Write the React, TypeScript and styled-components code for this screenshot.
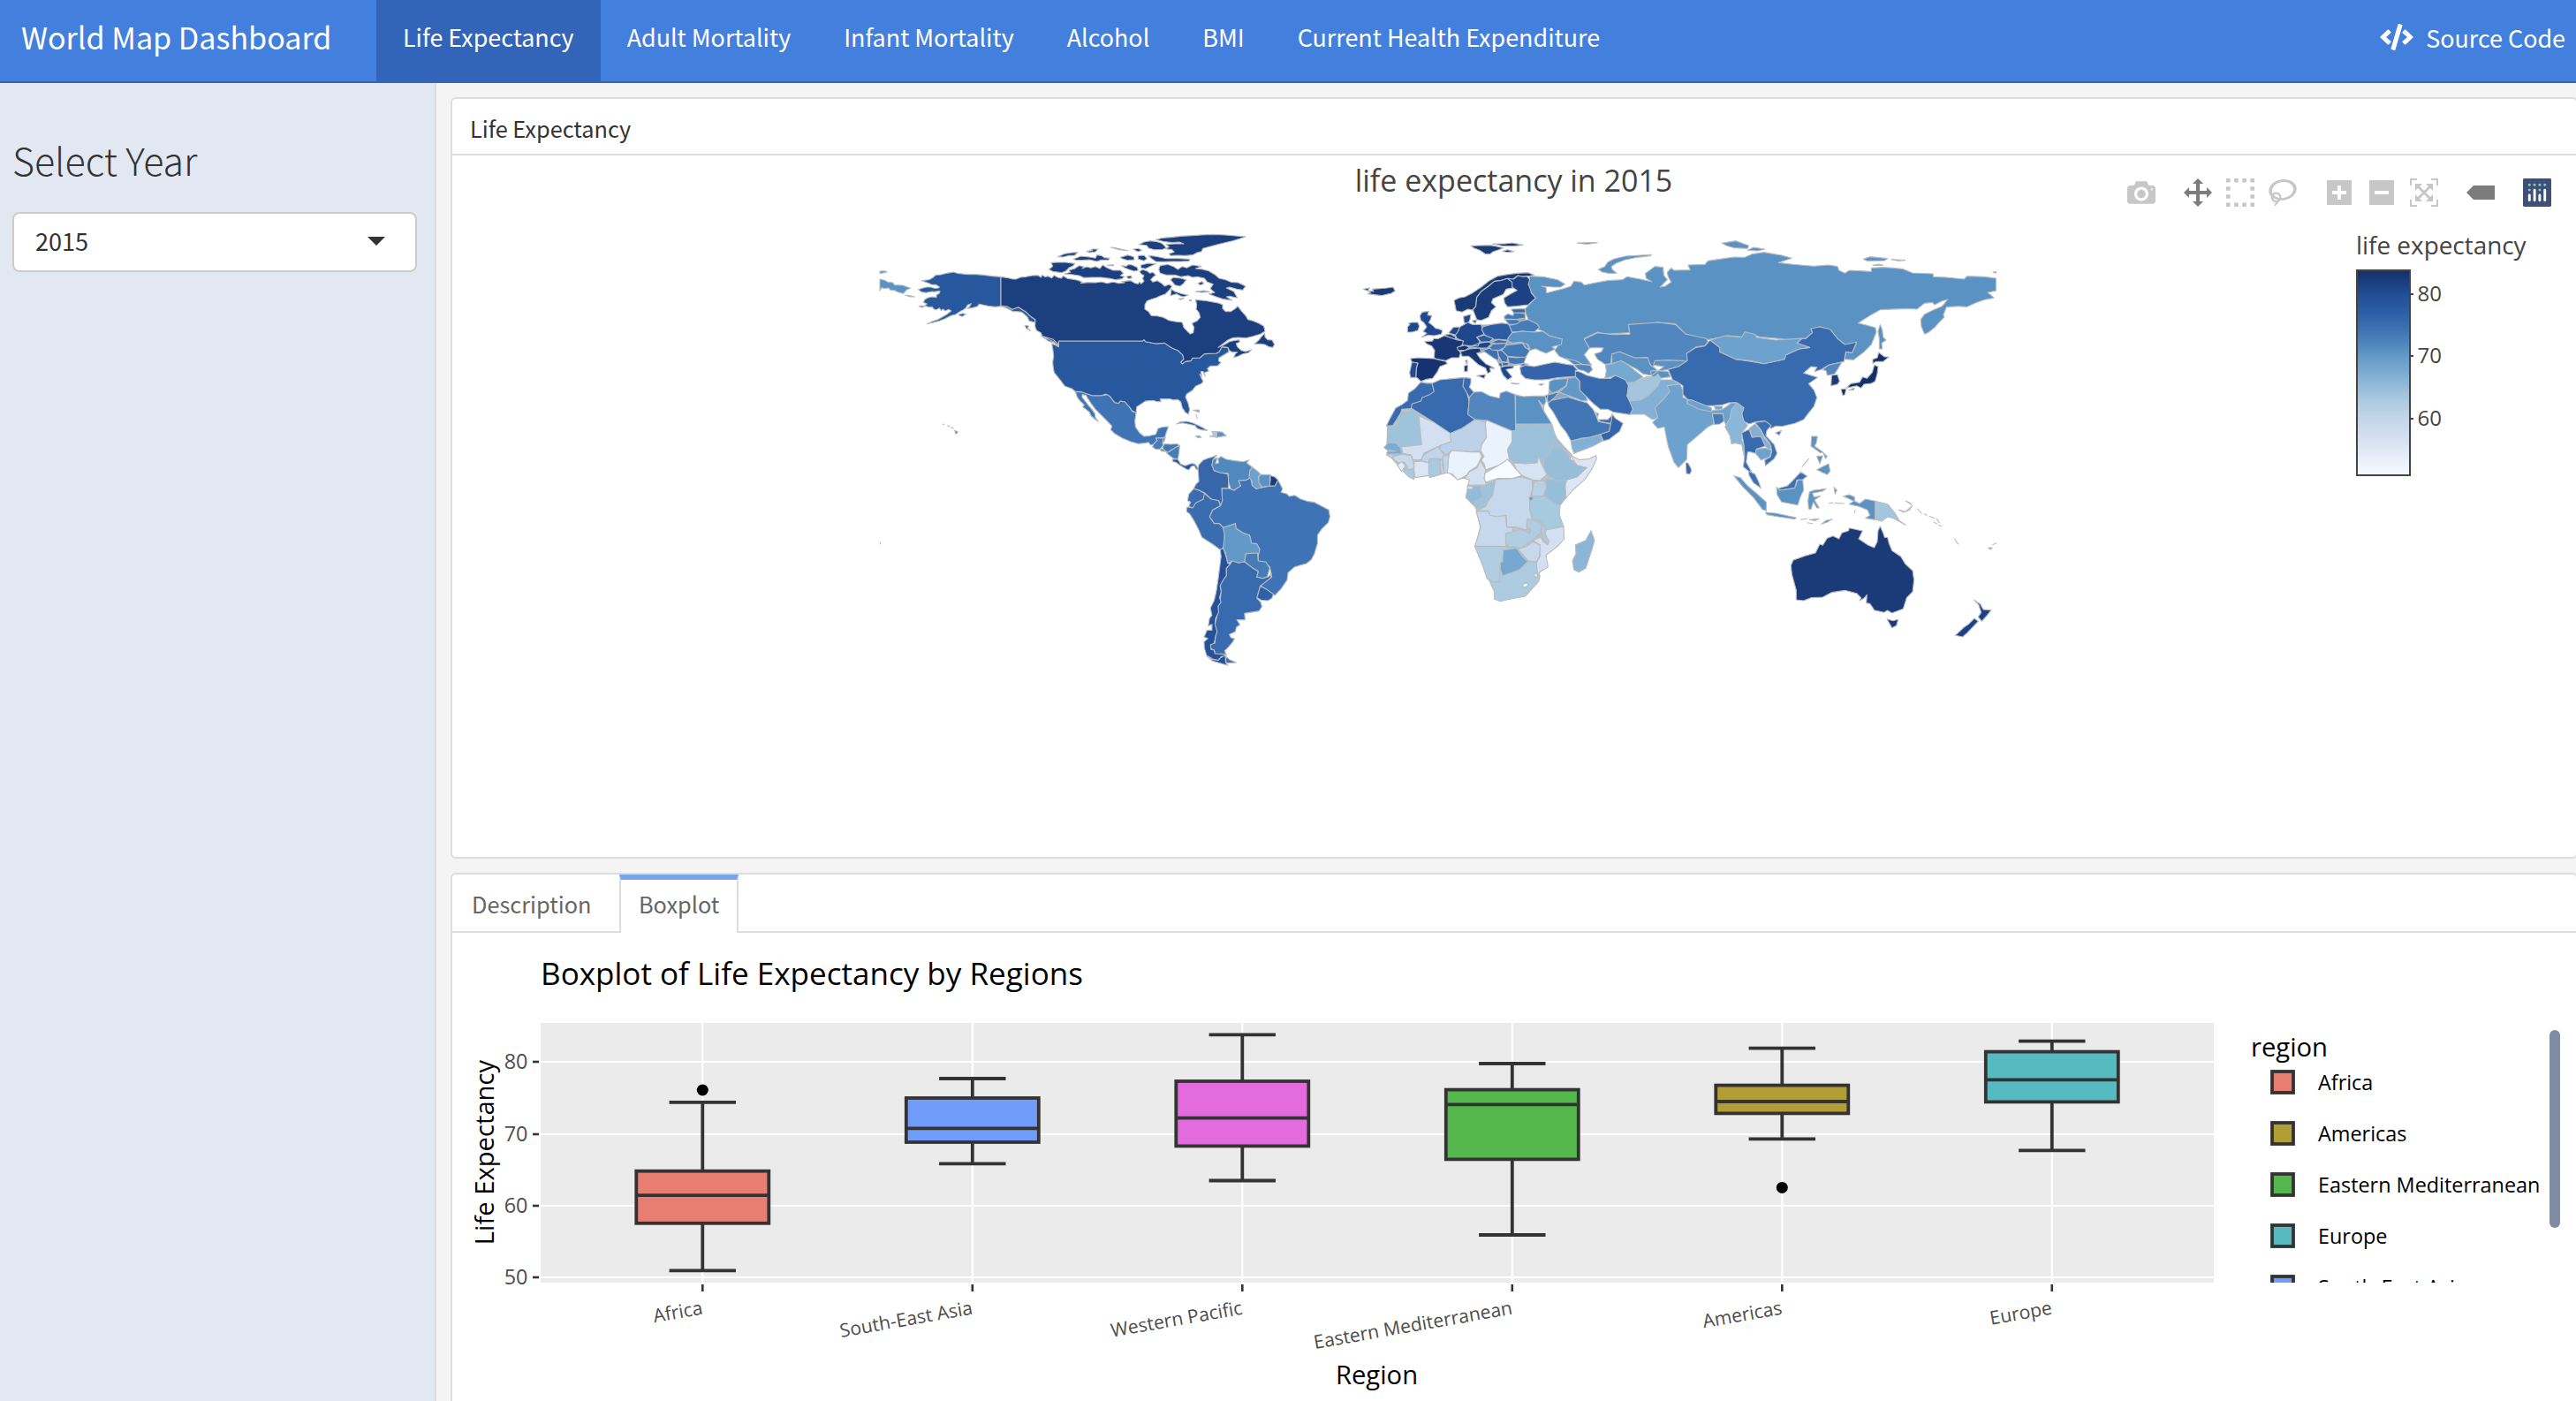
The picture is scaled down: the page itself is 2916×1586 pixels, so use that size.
import React from "react";
import styled, { createGlobalStyle } from "styled-components";

const ui = `"Noto Sans CJK SC", "Open Sans", sans-serif`;
const plot = `"Open Sans", "Noto Sans", sans-serif`;

const GlobalStyle = createGlobalStyle`
  * { box-sizing: border-box; }
  html, body { margin: 0; overflow: hidden; background: #f4f4f4; }
  body { font-family: ${ui}; color: #333; }
`;

const Page = styled.div`
  display: flex;
  flex-direction: column;
  height: 1586px;
  overflow: hidden;
`;

/* ---------- navigation bar ---------- */

const Navbar = styled.header`
  display: flex;
  flex: none;
  height: 94px;
  background: #437fdd;
  border-bottom: 2px solid #3264b8;
  color: #fff;
`;

const Brand = styled.div`
  flex: none;
  width: 426px;
  padding-left: 24px;
  font-size: 34.1px;
  line-height: 82px;
  white-space: nowrap;
`;

const Links = styled.nav`
  display: flex;
  flex: 1;
`;

const NavLink = styled.a<{ $active?: boolean }>`
  padding: 0 30px;
  font-size: 26.9px;
  line-height: 84px;
  white-space: nowrap;
  background: ${(p) => (p.$active ? "#3264b9" : "transparent")};
`;

const SourceLink = styled.a`
  display: flex;
  align-items: center;
  gap: 14px;
  height: 84px;
  padding-right: 12px;
  font-size: 26.9px;
  white-space: nowrap;
`;

/* ---------- page body ---------- */

const Body = styled.div`
  display: flex;
  flex: 1;
  min-height: 0;
`;

const Sidebar = styled.aside`
  flex: none;
  width: 494px;
  padding: 50px 20px 0 14px;
  background: #e2e8f2;
  border-right: 2px solid #dddddd;
`;

const SidebarTitle = styled.h3`
  margin: 0;
  height: 96px;
  font-size: 43px;
  font-weight: 300;
  line-height: 72px;
  color: #333;
`;

const Select = styled.div`
  display: flex;
  align-items: center;
  justify-content: space-between;
  height: 68px;
  padding: 0 34px 3px 24px;
  background: #fff;
  border: 2px solid #ccc;
  border-radius: 8px;
  font-size: 27.1px;
`;

const Caret = styled.span`
  width: 0;
  height: 0;
  border: 10px solid transparent;
  border-top-color: #333;
  border-bottom-width: 0;
`;

const Main = styled.main`
  display: flex;
  flex-direction: column;
  flex: 1;
  gap: 16px;
  min-width: 0;
  margin-right: -2px;
  padding: 16px 0 0 16px;
`;

const Card = styled.section<{ $height: number }>`
  display: flex;
  flex-direction: column;
  flex: none;
  height: ${(p) => p.$height}px;
  background: #fff;
  border: 2px solid #ddd;
  border-radius: 6px;
  overflow: hidden;
`;

const CardTitle = styled.div`
  flex: none;
  height: 64px;
  padding-left: 20px;
  border-bottom: 2px solid #ddd;
  font-size: 25.3px;
  line-height: 66px;
`;

const ChartArea = styled.div`
  position: relative;
  flex: 1;
  min-height: 0;

  > svg {
    display: block;
  }
`;

/* ---------- chart toolbar ---------- */

const ModeBar = styled.div`
  position: absolute;
  top: 26px;
  right: 28px;
  display: flex;
  gap: 32px;
`;

const ModeGroup = styled.div`
  display: flex;
  gap: 16px;
`;

const ModeIcon = styled.svg<{ $active?: boolean }>`
  display: block;
  width: 32px;
  height: 32px;
  fill: ${(p) => (p.$active ? "#7c7c7c" : "#c7c7c7")};
`;

/* ---------- tabs ---------- */

const Tabs = styled.div`
  display: flex;
  flex: none;
  height: 66px;

  &::after {
    content: "";
    flex: 1;
    border-bottom: 2px solid #ddd;
  }
`;

const Tab = styled.div<{ $active?: boolean; $width: number }>`
  width: ${(p) => p.$width}px;
  padding-left: ${(p) => (p.$active ? 20 : 22)}px;
  font-size: 25.3px;
  line-height: ${(p) => (p.$active ? 55 : 67)}px;
  color: #666;
  border-style: solid;
  border-color: ${(p) => (p.$active ? "#79a4e8 #ddd transparent" : "#ddd")};
  border-width: ${(p) => (p.$active ? "6px 2px 0" : "0 0 2px")};
`;

/* ---------- toolbar glyphs ---------- */

type Glyph = { w: number; d: string; active?: boolean };

const camera: Glyph = {
  w: 1000,
  d: "m500 450c-83 0-150-67-150-150 0-83 67-150 150-150 83 0 150 67 150 150 0 83-67 150-150 150z m400 150h-120c-16 0-34 13-39 29l-31 93c-6 15-23 28-40 28h-340c-16 0-34-13-39-28l-31-94c-6-15-23-28-40-28h-120c-55 0-100-45-100-100v-450c0-55 45-100 100-100h800c55 0 100 45 100 100v450c0 55-45 100-100 100z m-400-550c-138 0-250 112-250 250 0 138 112 250 250 250 138 0 250-112 250-250 0-138-112-250-250-250z m365 380c-19 0-35 16-35 35 0 19 16 35 35 35 19 0 35-16 35-35 0-19-16-35-35-35z",
};
const pan: Glyph = {
  w: 1000,
  active: true,
  d: "m1000 350l-187 188 0-125-250 0 0 250 125 0-188 187-187-187 125 0 0-250-250 0 0 125-188-188 186-187 0 125 252 0 0-250-125 0 187-188 188 188-125 0 0 250 250 0 0-126 187 188z",
};
const boxSelect: Glyph = {
  w: 1000,
  d: "m0 850l0-143 143 0 0 143-143 0z m286 0l0-143 143 0 0 143-143 0z m285 0l0-143 143 0 0 143-143 0z m286 0l0-143 143 0 0 143-143 0z m-857-286l0-143 143 0 0 143-143 0z m857 0l0-143 143 0 0 143-143 0z m-857-285l0-143 143 0 0 143-143 0z m857 0l0-143 143 0 0 143-143 0z m-857-286l0-143 143 0 0 143-143 0z m286 0l0-143 143 0 0 143-143 0z m285 0l0-143 143 0 0 143-143 0z m286 0l0-143 143 0 0 143-143 0z",
};
const lasso: Glyph = {
  w: 1031,
  d: "m1018 538c-36 207-290 336-568 286-277-48-473-256-436-463 10-57 36-108 76-151-13-66 11-137 68-183 34-28 75-41 114-42l-55-70 0 0c-2-1-3-2-4-3-10-14-8-34 5-45 14-11 34-8 45 4 1 1 2 3 2 5l0 0 113 140c16 11 31 24 45 40 4 3 6 7 8 11 48-3 100 0 151 9 278 48 473 255 436 462z m-624-379c-80 14-149 48-197 96 42 42 109 47 156 9 33-26 47-66 41-105z m-187-74c-19 16-33 37-39 60 50-32 109-55 174-68-42-25-95-24-135 8z m360 75c-34-7-69-9-102-8 8 62-16 128-68 170-73 59-175 54-244-5-9 20-16 40-20 61-28 159 121 317 333 354s407-60 434-217c28-159-121-318-333-355z",
};
const zoomIn: Glyph = {
  w: 875,
  d: "m1 787l0-875 875 0 0 875-875 0z m687-500l-187 0 0-187-125 0 0 187-188 0 0 125 188 0 0 187 125 0 0-187 187 0 0-125z",
};
const zoomOut: Glyph = {
  w: 875,
  d: "m0 788l0-876 875 0 0 876-875 0z m688-500l-500 0 0 125 500 0 0-125z",
};
const autoscale: Glyph = {
  w: 1000,
  d: "m250 850l-187 0-63 0 0-62 0-188 63 0 0 188 187 0 0 62z m688 0l-188 0 0-62 188 0 0-188 62 0 0 188 0 62-62 0z m-875-938l0 188-63 0 0-188 0-62 63 0 187 0 0 62-187 0z m875 188l0-188-188 0 0-62 188 0 62 0 0 62 0 188-62 0z m-125 188l-1 0-93-94-156 156 156 156 92-93 2 0 0 250-250 0 0-2 93-92-156-156-156 156 94 92 0 2-250 0 0-250 0 0 93 93 157-156-157-156-93 94 0 0 0-250 250 0 0 0-94 93 156 157 156-157-93-93 0 0 250 0 0 250z",
};
const hoverTag: Glyph = {
  w: 1500,
  active: true,
  d: "m375 725l0 0-375-375 375-374 0-1 1125 0 0 750-1125 0z",
};

const toolbar: Glyph[][] = [[camera], [pan, boxSelect, lasso], [zoomIn, zoomOut, autoscale], [hoverTag]];

function Toolbar() {
  return (
    <ModeBar>
      {toolbar.map((group, i) => (
        <ModeGroup key={i}>
          {group.map((g, j) => (
            <ModeIcon key={j} viewBox={`0 0 ${g.w} 1000`} $active={g.active}>
              <path transform="matrix(1 0 0 -1 0 850)" d={g.d} />
            </ModeIcon>
          ))}
        </ModeGroup>
      ))}
      <ModeGroup>
        <ModeIcon viewBox="0 0 132 132">
          <rect width="132" height="132" rx="6" fill="#3f4f75" />
          {[[78, 54], [102, 30], [78, 30], [54, 30], [30, 30], [30, 54]].map(([x, y]) => (
            <circle key={`${x}-${y}`} cx={x} cy={y} r="6" fill="#80cfbe" />
          ))}
          <g stroke="#fff" strokeWidth="12" strokeLinecap="round">
            <path d="M30 78V102M78 78V102M54 54V102M102 54V102" />
          </g>
        </ModeIcon>
      </ModeGroup>
    </ModeBar>
  );
}

/* ---------- world map ---------- */

type Land = [fill: string, ...rings: string[]];

const northAmerica: Land[] = [
  ["#5992c3", "48,198 64,202 75,208 92,210 98,218 125,219 140,224 152,229 138,235 128,247 110,242 98,236 84,235 78,228 62,230 55,226 48,238", "48,171 62,170 73,173 60,177 48,178"],
  ["#27579d",
    "459,190 430,188 400,184 375,182 345,182 310,178 298,174 275,178 255,183 238,184 228,193 215,200 190,203 215,212 222,216 238,217 250,224 248,228 232,229 220,225 208,225 195,228 178,233 190,242 205,244 225,240 232,241 252,238 250,246 240,252 240,260 225,258 210,262 200,268 196,277 208,282 200,288 215,293 225,292 232,300 240,302 250,296 256,305 262,300 270,306 282,301 290,306 275,318 258,328 245,335 225,342 208,350 230,345 250,340 268,333 290,322 305,318 320,308 330,303 340,296 346,286 358,281 352,292 345,298 360,296 380,290 385,283 400,286 420,290 440,292 459,290 475,295 490,302 500,308 515,308 530,310 548,325 555,340 575,345 576,335 560,325 545,310 530,300 518,293 498,301 480,291 459,287",
    "316,318 330,314 340,317 328,325 318,322", "180,290 190,288 200,291 190,294", "134,253 150,254 166,258 150,258",
    "302,712 313,717 306,724", "290,701 298,705", "278,696 284,699", "262,690 266,692",
    "655,408 940,408 945,404 950,410 985,417 1015,415 1040,432 1060,440 1076,455 1080,470 1070,480 1075,486 1085,478 1105,475 1110,466 1135,465 1150,452 1190,450 1200,445 1210,428 1230,430 1233,445 1220,453 1200,465 1198,475 1206,482 1195,492 1170,493 1160,502 1165,510 1150,516 1153,528 1146,512 1138,512 1142,530 1134,520 1140,535 1146,545 1140,553 1120,562 1110,575 1090,588 1086,598 1095,620 1100,640 1096,657 1085,650 1075,635 1070,615 1060,607 1045,608 1035,605 1015,605 1000,605 1003,614 990,614 975,610 950,612 935,622 920,632 918,652 905,645 895,632 880,615 865,612 858,620 845,617 830,597 815,588 800,594 770,594 740,585 733,580 712,580 700,570 677,562 660,540 640,515 637,500 635,480 638,460 636,440 632,418 645,422 655,428"],
  ["#1c3f7f",
    "459,190 478,193 500,198 510,198 525,192 545,190 565,186 585,185 595,192 600,184 608,190 620,188 632,194 640,185 652,192 665,195 670,187 685,196 700,198 720,202 735,208 730,212 755,209 780,210 800,207 820,212 840,208 860,212 880,210 870,206 900,203 915,212 925,214 930,207 935,214 945,205 940,195 945,186 935,180 930,172 940,166 955,170 965,178 975,175 985,184 975,192 968,200 975,208 990,203 1005,212 1015,222 1030,216 1040,222 1035,230 1028,238 1018,248 1000,255 985,262 970,266 955,272 948,285 948,300 960,308 970,322 990,323 1010,328 1030,338 1050,342 1075,345 1080,362 1092,375 1102,384 1112,380 1115,362 1108,348 1125,340 1136,328 1132,312 1122,300 1124,285 1120,268 1140,270 1160,272 1180,276 1200,280 1212,285 1212,298 1222,308 1240,308 1255,298 1263,290 1275,305 1290,322 1298,335 1315,340 1335,348 1352,358 1356,375 1340,385 1315,392 1290,398 1265,396 1245,398 1228,406 1210,420 1197,430 1215,422 1235,410 1255,406 1268,404 1270,412 1258,416 1262,428 1275,440 1290,444 1310,438 1300,448 1280,452 1265,460 1250,464 1255,452 1262,446 1245,446 1235,440 1230,430 1210,428 1200,445 1190,450 1150,452 1135,465 1110,466 1105,475 1085,478 1075,486 1070,480 1080,470 1076,455 1060,440 1040,432 1015,415 985,417 950,410 945,404 940,408 655,408 655,425 640,412 620,402 600,393 595,380 580,372 575,358 576,335 560,325 545,310 518,293 498,301 480,291 459,288",
    "985,64 1010,58 1045,55 1070,52 1110,50 1140,48 1180,46 1220,48 1290,54 1265,62 1245,68 1220,74 1195,80 1170,87 1145,94 1140,104 1125,108 1110,116 1085,118 1060,117 1035,118 1030,112 1048,106 1040,98 1018,95 1030,88 1020,80 1050,78 1080,78 1065,72 1040,74 1010,70",
    "928,80 945,72 965,68 985,70 1005,76 1015,85 1020,92 1005,98 980,98 960,92 955,84",
    "960,118 980,120 1000,124 1020,128 1060,128 1100,130 1098,137 1070,138 1040,138 1010,139 985,138 970,128",
    "925,118 945,117 955,128 945,136 925,130", "865,124 890,116 910,122 912,132 890,134 870,128", "908,97 925,94 938,100 925,105", "832,90 850,92 870,97 890,101 860,98",
    "706,130 730,120 760,123 780,127 785,116 800,118 810,125 828,127 825,133 800,133 785,138 760,132 735,134 715,134",
    "652,122 675,112 700,108 720,107 710,117 690,118 670,123", "750,103 770,101 765,96 788,96 780,105 760,108", "820,151 840,149 842,153",
    "622,165 635,155 630,142 650,141 680,141 710,145 705,152 690,160 680,170 665,176 650,174 635,172",
    "675,180 695,175 690,168 710,162 725,152 740,155 735,162 750,156 765,160 780,155 795,162 805,150 820,160 840,168 865,168 875,178 865,186 878,190 870,197 850,200 830,196 800,192 770,192 740,193 725,186 705,183",
    "868,152 885,154 892,148 905,150 922,158 925,168 912,171 895,166 880,160", "935,150 960,144 985,146 965,155 950,163 935,160", "885,190 900,186 905,194 892,196",
    "1000,152 1025,148 1045,155 1060,165 1075,155 1090,160 1110,150 1140,155 1120,162 1145,165 1165,170 1185,182 1200,195 1222,200 1240,208 1265,210 1290,222 1280,235 1260,232 1235,225 1225,228 1250,240 1262,262 1235,256 1225,258 1245,270 1215,266 1190,258 1165,248 1185,244 1170,230 1180,215 1160,208 1150,195 1125,190 1110,192 1095,186 1070,190 1050,184 1020,184 1000,178 995,165",
    "1035,200 1045,192 1070,195 1088,200 1080,212 1068,222 1050,218", "1038,232 1050,240 1075,248 1095,252 1080,258 1070,256 1055,248 1035,254", "1128,212 1142,206 1148,214 1135,218", "1120,240 1150,237 1168,241 1140,243", "1062,265 1080,263 1070,268", "1098,270 1106,268 1104,273",
    "1320,418 1335,405 1345,392 1355,382 1356,395 1365,404 1380,405 1388,420 1382,430 1370,428 1355,420 1340,418",
    "595,390 615,396 635,402 650,415 655,425 640,415 620,408", "540,355 553,357 550,364 560,373 546,366"],
  ["#3e74b5", "712,580 735,582 770,594 800,594 820,590 830,597 845,617 858,620 865,612 880,615 895,632 905,647 918,652 914,680 916,700 930,720 945,732 965,730 985,725 993,705 1010,700 1028,699 1022,715 1016,733 1012,736 985,738 990,745 978,758 968,762 960,752 945,755 925,757 900,750 870,737 845,722 832,710 836,697 820,680 805,665 790,650 780,640 765,620 755,605 748,592 735,590 735,600 745,612 755,625 768,640 778,655 780,668 790,682 780,675 765,662 760,650 745,638 737,632 742,625 728,612 718,598"],
  ["#467db9", "985,738 1010,738 1008,755 1010,762 1000,775 985,776 974,768 978,758 990,745", "1010,738 1018,733 1014,748 1008,755", "998,776 1010,774 1022,784 1005,782"],
  ["#4278b7", "1008,768 1015,757 1035,759 1058,757 1066,765 1050,772 1035,780 1025,786 1012,778"],
  ["#27579d", "1055,690 1070,682 1090,681 1110,686 1130,695 1145,703 1160,712 1140,710 1125,704 1118,695 1095,690 1075,686"],
  ["#b1cfe1", "1175,715 1190,716 1192,735 1180,733 1168,732 1182,728"],
  ["#5a93c4", "1192,716 1210,717 1224,730 1205,733 1192,736", "1120,731 1132,730 1140,735 1128,737", "1112,643 1132,642 1132,650", "1122,658 1126,672"],
];

const southAmerica: Land[] = [
  ["#467db9", "1032,12 1030,35 1026,60 1010,56 1000,48 988,38 1000,32 1015,22"],
  ["#25549b", "1008,60 1026,60 1035,76 1050,82 1070,74 1082,76 1092,90 1092,96 1086,92 1080,82 1070,84 1062,96 1055,94 1045,88 1030,78 1020,70 1010,68"],
  ["#3e74b5", "1355,130 1370,160 1365,172 1385,178 1392,186 1410,182 1430,195 1450,202 1475,206 1500,220 1522,232 1526,255 1520,275 1500,295 1485,317 1485,345 1475,380 1465,400 1450,413 1410,425 1388,445 1385,470 1365,500 1345,522 1335,515 1315,500 1297,490 1315,472 1335,460 1328,425 1310,408 1290,405 1290,380 1295,365 1285,347 1268,345 1262,318 1240,310 1217,295 1215,278 1175,292 1162,278 1145,278 1130,255 1140,232 1165,218 1172,200 1170,158 1192,158 1210,165 1232,150 1225,132 1252,130 1265,120 1270,148 1283,160 1330,150 1345,150"],
  ["#3766ab", "1092,92 1095,78 1110,62 1125,56 1140,52 1155,45 1142,60 1138,80 1145,98 1165,105 1190,110 1193,130 1192,158 1170,158 1172,200 1167,216 1160,200 1135,195 1115,175 1095,165 1078,160 1085,145 1095,135 1094,115"],
  ["#4f89be", "1142,60 1155,55 1150,75 1160,72 1158,58 1168,50 1185,60 1215,65 1240,68 1260,62 1252,72 1270,86 1262,100 1265,120 1252,130 1225,132 1232,150 1210,165 1200,160 1192,135 1192,108 1165,105 1145,98 1138,80"],
  ["#6ca2cd", "1270,86 1285,98 1298,110 1290,120 1295,145 1303,155 1283,160 1270,148 1270,135 1260,120 1262,100"],
  ["#5992c3", "1298,112 1330,112 1328,130 1330,150 1303,154 1292,140 1292,120"],
  ["#1a3a78", "1330,115 1345,120 1355,130 1345,150 1328,150 1330,130"],
  ["#3a6cb0", "1078,160 1095,165 1113,175 1110,195 1085,208 1075,225 1062,220 1068,205 1058,200 1062,178", "1113,175 1135,195 1160,200 1165,218 1140,232 1130,255 1145,278 1162,278 1175,292 1180,310 1178,350 1172,365 1165,367 1140,348 1105,325 1095,300 1080,270 1065,245 1055,238 1055,222 1075,225 1085,208 1110,195"],
  ["#6399c8", "1175,292 1215,278 1217,295 1240,310 1262,318 1268,345 1285,347 1295,365 1292,382 1250,380 1245,408 1225,412 1205,405 1190,413 1183,380 1175,362 1180,320"],
  ["#467db9", "1250,380 1288,378 1290,405 1315,408 1328,430 1320,458 1305,464 1285,460 1290,440 1270,428 1245,408"],
  ["#376aae", "1198,415 1205,405 1225,412 1245,408 1270,428 1290,440 1285,460 1305,464 1325,458 1333,448 1332,462 1297,490 1286,532 1298,545 1302,560 1293,575 1245,583 1247,605 1220,605 1230,622 1218,630 1215,645 1195,655 1200,665 1212,670 1205,682 1190,700 1180,710 1185,725 1148,720 1145,708 1133,702 1135,685 1147,685 1150,660 1148,620 1155,590 1158,560 1165,540 1168,510 1165,480 1185,455 1185,430"],
  ["#2f61a8", "1297,490 1315,500 1340,518 1335,532 1322,540 1300,538 1286,530"],
  ["#24519a", "1165,367 1175,362 1183,385 1190,413 1198,415 1185,430 1185,455 1172,475 1165,490 1168,510 1163,530 1168,545 1158,560 1160,580 1150,600 1148,620 1155,645 1150,660 1145,685 1133,690 1135,706 1145,708 1148,720 1185,722 1165,735 1158,742 1140,738 1120,725 1113,700 1112,680 1125,668 1112,664 1122,640 1138,640 1138,620 1126,626 1130,600 1138,590 1133,565 1145,540 1152,510 1158,470 1163,430 1168,390", "1120,727 1140,740 1160,742 1168,730 1182,727 1183,750 1190,760 1165,752 1140,745"],
  ["#376aae", "1183,728 1195,740 1218,750 1185,752"],
  ["#9aa7b0", "47,343 48,343 48,348"],
];

const europe: Land[] = [
  ["#8ea9c8", "368,362 440,354 542,352 555,312 586,302 590,335 620,378 600,420 592,465 575,488 550,490 510,500 485,462 460,440 435,450 400,440 370,448 362,440 340,400", "672,547 758,528 798,610 740,598 668,612"],
  ["#1a3a78", "40,232 62,228 55,236 75,240 70,232 95,230 120,228 140,225 148,238 135,246 100,254 72,250 55,248 65,243", "405,85 430,84 470,83 490,86 515,92 500,98 480,105 470,113 455,113 435,100 415,92", "478,78 520,78 545,75 582,82 550,86 510,85", "512,103 530,98 552,104 530,107", "348,270 365,262 385,258 410,245 440,225 465,205 495,188 530,182 560,178 600,176 620,184 600,188 580,190 565,186 545,200 530,196 505,203 485,205 465,222 440,240 425,260 422,290 410,303 395,300 375,310 355,305"],
  ["#1b3c7b", "425,260 440,240 465,222 485,205 505,203 530,196 545,208 548,228 525,232 515,250 480,265 475,278 490,292 475,305 465,328 440,338 425,335 415,310 412,303 422,290"],
  ["#1c4285", "530,196 550,198 565,186 580,190 595,188 605,200 600,215 608,235 610,245 625,262 600,285 560,290 530,292 520,280 517,262 545,245 562,236 545,225 545,208"],
  ["#22498f", "380,325 395,320 405,318 402,335 395,350 382,345", "410,340 425,336 420,348"],
  ["#1f488c", "232,322 240,310 262,307 258,320 272,322 268,335 262,345 275,355 285,365 295,367 308,372 305,385 280,390 260,388 238,395 255,382 243,376 255,360 245,345 235,338", "190,360 198,352 194,348 205,345 225,345 230,358 225,372 205,378 190,378", "315,388 335,384 355,395 350,402 330,395", "330,380 345,362 368,360 360,378 352,388", "368,360 385,350 395,345 410,352 440,352 445,372 450,385 425,395 435,410 430,425 400,425 375,422 378,408 358,400 352,388 360,378", "400,428 435,415 465,410 475,418 460,432 430,432"],
  ["#183774", "248,410 275,408 278,400 295,400 315,390 335,397 360,405 380,408 375,422 362,432 370,450 365,465 340,465 320,475 290,470 280,465 282,440 272,425 255,418"],
  ["#163270", "200,468 225,465 280,468 320,478 325,485 300,495 290,515 275,535 255,538 235,545 225,535 218,530 220,500 225,483 205,480", "358,430 385,422 400,430 385,440 362,440"],
  ["#214b92", "205,480 225,483 220,500 218,532 200,532 197,515"],
  ["#2c5da4", "445,360 475,352 510,347 530,350 542,358 545,385 530,405 505,403 480,402 460,392 450,385 442,370"],
  ["#2a5ba2", "425,395 450,388 480,400 470,410 440,412"],
  ["#3c70b3", "475,412 500,403 530,408 525,415 490,418", "495,440 512,440 530,460 528,480 510,478 500,460", "445,440 470,432 495,440 498,455 500,475 485,468 462,452", "500,478 512,485 510,500 500,490", "510,480 535,482 530,492 512,492"],
  ["#4379b7", "468,430 480,418 525,415 520,430 500,440 475,438", "510,440 525,422 560,418 580,415 590,430 605,440 592,462 560,463 530,460 520,450", "530,462 560,465 592,462 585,485 555,488 535,485", "518,325 530,316 548,322 552,310 588,315 590,330 560,335 520,333", "520,335 560,335 575,340 560,352 535,352"],
  ["#183774", "370,445 400,435 435,432 440,445 425,450 435,465 455,485 480,497 485,502 470,500 472,512 462,518 455,500 430,488 410,470 398,460 375,460", "425,526 455,522 450,535", "382,493 395,490 393,512 383,512", "386,475 393,473 392,488"],
  ["#1f488c", "505,498 525,493 552,492 548,500 525,505 545,530 530,540 515,525 508,510", "542,551 570,553 558,555", "635,556 652,553 645,559"],
  ["#3766ab", "542,300 588,298 590,312 550,312"],
  ["#467db9", "535,355 560,350 575,340 600,335 630,350 638,362 620,378 580,375 545,378"],
  ["#5992c3", "530,400 545,380 580,375 620,378 650,375 670,390 715,402 712,420 680,428 692,435 660,450 640,442 625,434 605,440 598,420 575,412 545,415 530,408", "580,415 600,420 605,435 592,432", "765,75 800,74 835,74 810,78 795,79", "838,165 860,155 870,140 890,130 930,120 980,117 1018,115 1015,119 970,124 930,132 900,143 882,155 885,165 900,178 870,178 850,173", "672,545 690,538 735,535 728,560 700,578 680,585 670,570"],
  ["#5187be", "730,468 760,475 785,488 755,488", "755,488 785,488 810,490 818,505 805,518 790,510 770,505"],
  ["#3464aa", "572,498 590,490 620,495 650,488 690,480 730,487 752,490 765,505 762,528 740,530 700,533 670,538 650,540 620,540 590,535 575,520", "572,492 580,484 600,487 585,492"],
  ["#1c4285", "658,592 666,594 662,610"],
  ["#467db9", "666,590 680,588 705,580 690,600 668,618 664,608"],
  ["#6399c8", "735,535 760,530 775,545 775,570 795,590 800,612 780,610 740,595 705,582 730,560"],
  ["#376aae", "760,508 780,515 800,525 840,535 880,535 895,525 930,540 940,560 935,595 945,615 955,640 945,658 890,650 870,640 845,640 820,620 800,600 775,575 775,545 760,528"],
];

const africa: Land[] = [
  ["#bdc3c9", "205,98 243,102 320,87 372,87 368,115 383,134 440,147 472,154 495,130 555,149 626,147 622,195 648,240 666,290 715,345 712,360 765,388 735,420 697,450 696,490 673,520 676,550 688,588 668,655 630,685 608,740 555,820 475,838 457,810 390,657 407,590 395,537 388,505 367,450 372,430 355,423 330,428 300,405 185,420 127,380 94,342 92,310 94,250 140,190 180,130"],
  ["#4276b5", "635,160 665,150 680,140 740,160 770,168 790,190 800,210 808,232 850,240 845,265 815,275 780,285 745,290 715,298 700,270 680,245 655,200 640,180"],
  ["#376aae", "808,225 840,225 855,210 855,225 850,238 815,232", "800,200 808,205 805,218"],
  ["#3464aa", "855,205 865,220 892,238 880,265 860,280 845,292 825,298 815,275 845,265 850,238 853,225"],
  ["#83b0d6", "715,298 745,290 780,285 815,275 822,298 790,315 765,325 725,340 718,320"],
  ["#376aae", "205,98 225,102 243,102 250,130 235,140 210,150 205,162 175,172 172,188 140,190 138,200 125,222 110,245 88,247 100,222 120,185 140,175 160,160 163,135 185,120", "243,102 270,90 320,85 352,82 348,112 362,135 370,165 365,205 390,225 345,255 305,272 250,235 172,186 175,172 205,162 210,150 235,140 250,130", "352,82 375,85 375,100 370,115 385,132 370,150 362,135 348,112"],
  ["#5187be", "370,150 385,132 410,130 440,145 472,152 475,135 495,128 525,140 527,262 515,264 430,228 390,225 365,208"],
  ["#5992c3", "527,142 555,147 590,145 628,145 630,165 622,178 605,160 625,200 650,240 527,241"],
  ["#9ec4dc", "172,188 200,210 208,310 145,313 138,320 120,308 90,310 92,248 125,247 125,225 138,205 140,200 172,198"],
  ["#d3e0f1", "198,212 250,235 305,272 308,300 275,312 245,325 215,340 207,362 178,362 172,345 145,340 138,318 208,310"],
  ["#bdd2e9", "305,272 345,255 390,225 425,235 428,285 410,310 410,330 375,335 310,330 290,345 268,325 275,312 308,300"],
  ["#eaf2fb", "430,228 515,264 515,300 500,330 505,360 470,380 425,395 420,375 410,362 420,350 408,330 412,310 428,285 424,235"],
  ["#9bc1db", "527,241 650,240 658,270 668,290 650,310 645,335 625,360 615,375 605,350 600,372 560,375 520,372 505,350 500,325 515,300 515,264 527,262", "658,290 668,290 690,315 718,345 700,330 680,322 650,320"],
  ["#dde7f4", "712,345 745,362 778,358 800,347 802,358 785,395 760,430 720,465 698,492 695,450 700,430 735,420 768,388 735,380"],
  ["#97bed9", "650,320 680,322 705,340 712,360 735,380 768,388 735,420 700,430 665,432 635,415 620,385 625,360 645,335", "630,425 665,432 700,430 695,450 698,490 675,520 640,495 625,485 632,455"],
  ["#d6e3f2", "520,372 560,375 600,372 605,350 615,375 620,385 633,412 610,432 585,430 548,415 530,395"],
  ["#f8fbff", "425,405 470,380 500,360 530,395 548,415 515,425 465,425 425,438 418,420"],
  ["#eaf2fb", "300,345 310,330 375,335 405,335 412,350 395,385 370,400 360,415 330,430 312,410 295,405"],
  ["#d3e0f1", "412,355 410,370 425,395 420,425 428,447 365,447 370,430 355,425 370,402 395,390"],
  ["#c0d5ea", "280,350 300,345 295,405 285,408 278,380", "270,360 280,362 284,408 274,410", "208,365 210,352 225,338 262,318 285,345 275,360 235,358 232,372"],
  ["#a9cadf", "235,358 268,358 272,412 235,422 230,400", "145,400 160,388 180,400 182,428 165,420"],
  ["#dbe5f3", "182,368 207,366 232,372 232,415 185,422 182,395"],
  ["#79acd6", "80,320 95,303 120,305 135,320 142,342 88,342 92,333 120,332 90,328"],
  ["#c8d9ec", "110,350 145,343 172,347 180,368 182,390 165,395 150,370 130,372 115,362", "88,345 115,345 105,355"],
  ["#e5eef8", "125,380 140,368 153,382 140,402"],
  ["#92bcdb", "365,450 408,450 415,490 385,505 388,520 358,490"],
  ["#d6e3f2", "363,450 382,452 380,462 365,460"],
  ["#9ec4dc", "412,455 440,440 458,435 450,480 430,500 420,525 390,525 385,505 415,490"],
  ["#c6d8ec", "458,428 515,425 548,420 583,430 585,460 575,490 575,530 585,562 565,570 565,600 530,590 497,590 495,550 465,555 440,550 435,535 395,535 425,520 435,500 450,480", "393,537 435,535 440,550 465,555 492,550 497,590 517,592 517,610 493,612 495,660 388,655 400,620 408,590"],
  ["#b9d1e7", "590,435 625,432 632,455 620,485 580,485"],
  ["#a6cade", "585,485 625,485 678,520 675,550 690,588 630,600 615,570 582,560 575,530 575,500"],
  ["#5c96c7", "573,488 587,488 582,500 574,498"],
  ["#b1cde2", "495,612 517,605 545,598 575,612 577,600 565,590 567,562 600,570 615,580 612,610 585,632 545,662 505,658 493,640", "388,655 470,655 530,658 485,670 483,710 473,775 450,778 430,765 415,720"],
  ["#d3e0f1", "630,600 690,588 692,630 670,655 630,685 637,725 610,742 605,752 598,735 598,710 610,690 608,650 585,635 612,625 622,640 635,650 640,640 628,615"],
  ["#aecce2", "615,580 625,590 630,625 640,635 635,650 622,630 615,610"],
  ["#c6d8ec", "535,665 565,655 585,640 610,650 608,690 598,708 570,705"],
  ["#76a9d2", "485,668 530,662 550,690 568,707 540,735 515,745 483,755 475,735 475,710 483,708"],
  ["#adcbe1", "475,712 475,735 483,755 515,745 540,735 570,708 598,708 600,745 610,755 605,775 560,825 520,832 475,842 455,835 455,810 437,770 455,778 473,775"],
  ["#ffffff", "550,788 562,778 570,785 558,796"],
  ["#dbe5f3", "590,748 600,746 602,760 591,760"],
  ["#8bb6d8", "783,602 795,635 785,670 765,730 742,743 725,735 720,705 732,680 730,650 765,635"],
];

const asia: Land[] = [
  ["#5992c3",
    "-355,188 -310,190 -260,200 -235,215 -250,225 -275,225 -315,222 -300,226 -298,245 -270,238 -240,230 -215,222 -205,205 -180,208 -170,218 -130,210 -90,203 -40,200 -25,190 20,198 60,207 40,195 38,178 70,155 98,158 100,185 112,200 88,225 105,222 125,208 115,190 112,175 125,160 135,168 190,167 183,150 240,148 250,136 310,127 340,123 375,124 400,113 440,107 500,117 535,127 490,142 540,148 610,154 660,150 690,155 695,168 715,178 730,168 805,172 805,160 850,158 910,163 945,177 1015,180 1015,190 1060,192 1120,198 1130,188 1190,190 1228,195 1228,238 1200,243 1222,262 1190,268 1160,278 1130,292 1100,290 1060,293 1050,318 1052,328 1035,345 1020,362 1000,378 986,385 975,360 973,335 985,318 1010,305 1045,290 1065,267 1045,272 1020,285 1012,277 985,280 960,300 925,298 835,302 800,322 760,347 790,355 818,362 822,378 805,420 780,445 745,472 715,470 718,445 740,448 755,415 715,420 690,400 665,370 630,360 600,368 605,380 580,400 555,400 530,405 490,400 430,395 380,380 370,395 320,390 270,400 240,405 175,385 140,350 80,345 40,350 -20,355 -15,380 -100,385 -125,378 -170,400 -152,432 -170,455 -145,490 -175,488 -230,470 -255,460 -270,440 -245,402 -290,390 -310,375 -335,365 -360,335 -370,310 -370,298 -335,262 -352,240 -360,212",
    "835,352 842,370 845,395 855,405 840,415 842,435 832,435 832,400 828,375", "297,76 345,68 388,84 385,94 340,92 315,85", "385,100 405,90 443,96 420,102", "778,130 800,122 860,128 850,135 790,136", "873,131 920,134 895,136", "810,151 830,147 845,151", "1218,175 1228,172 1228,178"],
  ["#5187be", "40,348 80,345 140,352 175,385 245,400 250,410 240,425 210,428 180,450 180,475 165,482 110,473 70,490 60,497 45,470 0,465 -50,445 -76,452 -80,485 -98,488 -110,480 -125,470 -135,452 -112,445 -105,432 -130,430 -152,432 -170,402 -125,380 -75,386 -15,385 -20,352"],
  ["#5992c3", "-76,452 -50,445 0,465 45,464 55,490 70,500 80,510 60,525 30,520 10,505 -40,478 -76,485", "65,490 70,475 110,473 165,475 180,480 150,495 115,505 80,510 100,495", "55,510 75,508 115,512 122,530 85,535 60,530"],
  ["#76a9d2", "-98,490 -76,485 -45,475 -20,490 10,515 30,530 0,548 -25,550 -65,525 -80,530 -100,535 -95,510"],
  ["#83b0d6", "-20,612 20,608 50,590 80,560 90,540 130,540 155,555 115,560 120,580 100,605 75,632 80,668 62,675 35,657 -15,657 -5,640"],
  ["#a3c6de", "-25,550 0,550 40,530 70,530 80,520 90,535 80,560 50,590 20,608 -20,612 -22,590"],
  ["#6ca2cd", "155,555 165,575 165,600 180,605 180,620 262,645 300,640 330,618 350,618 370,630 345,650 325,670 312,695 303,675 300,655 265,655 270,690 250,700 215,730 180,760 178,810 150,838 135,820 115,765 102,700 80,705 62,685 80,668 70,635 100,605 120,580 112,560"],
  ["#376aae", "258,405 290,430 290,445 345,470 400,478 440,485 510,470 515,455 560,435 595,430 555,418 560,400 582,400 605,380 600,366 630,360 665,368 690,400 715,420 755,412 740,448 718,445 712,478 660,490 635,505 612,512 620,497 600,495 575,517 600,525 622,532 592,553 610,575 620,600 610,630 590,655 575,675 545,688 500,698 480,697 465,705 440,680 410,683 390,690 370,680 365,655 372,635 345,617 320,618 300,625 265,628 230,628 180,605 165,590 165,560 150,550 130,540 115,505 150,495 180,475 178,450 210,430 240,425", "480,720 500,712 492,728"],
  ["#6ca2cd", "258,405 310,390 365,395 375,377 410,385 415,395 430,398 480,405 555,400 568,402 552,415 595,430 560,435 515,455 510,470 440,485 400,476 345,470 290,445 290,430", "180,610 195,608 262,635 262,648 220,640 180,620", "272,630 300,630 298,640 275,640"],
  ["#467db9", "265,655 300,655 305,680 290,690 272,692"],
  ["#8bb6d8", "330,640 350,618 372,635 365,655 372,680 385,695 365,720 365,745 378,780 375,810 365,760 345,755 330,757 325,730 308,700 325,670"],
  ["#376aae", "365,720 390,708 400,735 430,732 445,765 415,775 412,790 395,785 385,785 380,820 400,855 388,850 370,835 375,800 372,760"],
  ["#3b70b4", "410,685 445,680 465,695 450,712 447,730 475,760 485,790 475,808 445,832 443,812 462,802 467,780 460,755 440,730 430,710", "388,850 410,860 422,885 430,908 405,890 390,865", "490,908 520,900 540,880 565,853 587,867 570,880 552,880 545,908 495,915"],
  ["#83b0d6", "390,705 410,690 430,712 440,735 465,765 460,780 445,765 430,732 400,735"],
  ["#6ca2cd", "412,790 415,775 445,772 467,780 460,802 430,812"],
  ["#5187be", "640,505 660,490 705,480 690,505 680,520 655,525 652,510"],
  ["#1a3a78", "670,525 690,522 697,545 690,555 668,560"],
  ["#132f69", "830,447 850,462 865,462 845,478 820,478 810,485 810,470 825,465", "815,490 828,495 825,520 818,545 805,552 780,555 770,568 755,560 720,568 735,553 765,548 775,530 790,535 808,515", "702,572 720,570 715,590 708,593", "728,575 748,568 745,574"],
  ["#3464aa", "175,822 182,822 192,840 194,850 188,860 177,858"],
  ["#5992c3", "338,866 360,872 385,900 420,930 448,955 448,985 435,980 405,940 370,905", "445,990 480,993 550,1008 545,1013 490,1005 450,998", "483,905 495,915 545,908 555,880 572,880 575,915 565,935 555,965 500,955 485,930", "595,920 610,915 652,910 640,918 605,925 610,938 632,935 612,948 628,975 620,975 608,955 600,980 592,978 590,950", "602,732 622,732 618,755 612,765 640,785 632,788 600,765", "620,800 640,798 630,825", "640,785 655,800 650,808", "620,845 640,835 660,825 665,850 655,862 640,855", "570,835 592,808", "678,905 688,915 682,928"],
];

const oceania: Land[] = [
  ["#5992c3", "380,245 400,240 418,248 418,262 435,270 455,255 488,262 488,325 455,320 470,310 462,292 432,280 400,272 415,262 395,252", "332,269 345,267", "352,268 382,270", "235,324 255,322", "265,325 298,322 285,328", "258,335 275,338", "305,340 320,328 342,323 325,334", "418,300 420,293"],
  ["#a3c6de", "488,262 530,272 545,290 555,302 570,328 592,343 550,320 530,315 510,330 488,325", "568,292 590,298 612,280 605,292 585,300", "592,262 604,266 614,278 606,270", "632,288 645,303", "655,305 663,310", "672,313 690,320", "697,322 706,335", "686,333 697,338", "704,343 714,347", "758,390 763,400", "764,400 770,408"],
  ["#76a9d2", "872,420 886,420 880,426", "887,410 899,404"],
  ["#1a3a78", "505,347 515,370 520,385 530,385 535,405 545,430 575,450 590,475 615,498 620,530 615,570 595,590 583,628 545,642 530,633 518,640 485,632 470,610 458,608 460,580 450,592 435,600 440,590 425,575 385,565 340,572 310,588 270,590 245,600 220,597 220,565 205,510 202,480 210,462 250,448 285,438 300,408 310,412 325,388 345,380 365,390 375,370 398,362 400,353 445,363 432,390 465,412 485,420 495,400 498,362", "528,662 548,668 566,664 560,685 545,692"],
  ["#1c4285", "825,598 845,612 855,630 882,632 868,650 850,670 838,655 848,640 840,615", "825,660 838,670 800,710 785,723 760,718 790,690 805,680"],
];

const regions: { x: number; y: number; sx: number; lands: Land[] }[] = [
  { x: 980, y: 250, sx: 3, lands: northAmerica },
  { x: 980, y: 500, sx: 2.9037, lands: southAmerica },
  { x: 1850, y: 250, sx: 3, lands: asia },
  { x: 1540, y: 400, sx: 3, lands: africa },
  { x: 1530, y: 250, sx: 3, lands: europe },
  { x: 1960, y: 480, sx: 3, lands: oceania },
];

const scaleStops: [number, string][] = [
  [0, "#132f69"], [11, "#214c93"], [22, "#2f61a8"], [31, "#4278b6"], [39, "#5890c2"], [42, "#639ac8"],
  [53, "#86b3d5"], [65, "#b1cde1"], [73, "#c5d6ea"], [84, "#d8e3f2"], [100, "#f7fbff"],
];

function WorldMap() {
  return (
    <svg width="2404" height="794" viewBox="512 176 2404 794" fontFamily={plot} fill="#444">
      <defs>
        <linearGradient id="blues" x1="0" y1="0" x2="0" y2="1">
          {scaleStops.map(([at, c]) => (
            <stop key={at} offset={`${at}%`} stopColor={c} />
          ))}
        </linearGradient>
      </defs>
      <text x="1713.5" y="217" fontSize="34" textAnchor="middle">life expectancy in 2015</text>
      {regions.map((r, i) => (
        <g key={i} transform={`translate(${r.x} ${r.y}) scale(${1 / r.sx} ${1 / 3})`} stroke="#b9bcbf" strokeWidth="1.1" strokeLinejoin="round">
          {r.lands.map(([fill, ...rings], j) => (
            <path key={j} fill={fill} vectorEffect="non-scaling-stroke" d={rings.map((p) => `M${p}Z`).join("")} />
          ))}
        </g>
      ))}
      <text x="2667" y="288" fontSize="27.9">life expectancy</text>
      <rect x="2668" y="306" width="60" height="232" fill="url(#blues)" stroke="#444" strokeWidth="2" />
      {[[80, 333], [70, 403], [60, 474]].map(([v, y]) => (
        <g key={v}>
          <path d={`M2729 ${y}h3`} stroke="#444" strokeWidth="2" />
          <text x="2736.5" y={y + 7.5} fontSize="24">{v}</text>
        </g>
      ))}
    </svg>
  );
}

/* ---------- boxplot ---------- */

type Box = { name: string; fill: string; max: number; q3: number; med: number; q1: number; min: number; out?: number };

const boxes: Box[] = [
  { name: "Africa", fill: "#e87e72", max: 1247.8, q3: 1325.7, med: 1353.2, q1: 1384.8, min: 1438.3, out: 1234 },
  { name: "South-East Asia", fill: "#709bf9", max: 1221, q3: 1243, med: 1277.3, q1: 1293, min: 1317.3 },
  { name: "Western Pacific", fill: "#e46bdd", max: 1171.4, q3: 1224, med: 1265.7, q1: 1297.4, min: 1336.5 },
  { name: "Eastern Mediterranean", fill: "#53b74c", max: 1204, q3: 1233.6, med: 1250.3, q1: 1312.4, min: 1398 },
  { name: "Americas", fill: "#b19e34", max: 1186.7, q3: 1228.6, med: 1247, q1: 1260.4, min: 1289.4, out: 1344.4 },
  { name: "Europe", fill: "#56bac1", max: 1178.7, q3: 1190.6, med: 1222.4, q1: 1247.4, min: 1302.4 },
];

const legend = [
  ["Africa", "#e87e72"], ["Americas", "#b19e34"], ["Eastern Mediterranean", "#53b74c"], ["Europe", "#56bac1"], ["South-East Asia", "#709bf9"],
];

const centre = (i: number) => 795.3 + i * 305.5;

function BoxPlot() {
  return (
    <svg width="2404" height="530" viewBox="512 1056 2404 530" fontFamily={plot}>
      <defs>
        <clipPath id="legendClip">
          <rect x="2530" y="1150" width="386" height="302" />
        </clipPath>
      </defs>
      <text x="612" y="1115" fontSize="35.05">Boxplot of Life Expectancy by Regions</text>
      <rect x="612" y="1158" width="1894" height="294" fill="#ebebeb" />
      <g stroke="#fff" strokeWidth="2.2">
        {[1202, 1284, 1365, 1446].map((y) => <path key={y} d={`M612 ${y}H2506`} />)}
        {boxes.map((b, i) => <path key={b.name} d={`M${centre(i)} 1158V1452`} />)}
      </g>
      {[[80, 1202], [70, 1284], [60, 1365], [50, 1446]].map(([v, y]) => (
        <g key={v}>
          <path d={`M603 ${y}h7`} stroke="#333" strokeWidth="2.6" />
          <text x="597.5" y={y + 8} fontSize="23.4" fill="#4d4d4d" textAnchor="end">{v}</text>
        </g>
      ))}
      {boxes.map((b, i) => {
        const x = centre(i);
        return (
          <g key={b.name}>
            <g stroke="#333" strokeWidth="3.8" fill="none">
              <path d={`M${x} ${b.max}V${b.min}M${x - 37.7} ${b.max}h75.4M${x - 37.7} ${b.min}h75.4`} />
              <rect x={x - 75} y={b.q3} width="150" height={b.q1 - b.q3} fill={b.fill} />
              <path d={`M${x - 75} ${b.med}h150`} />
            </g>
            {b.out && <circle cx={x} cy={b.out} r="6.5" />}
            <path d={`M${x} 1454v8`} stroke="#333" strokeWidth="2.6" />
            <text transform={`translate(${x + 1} 1487.5) rotate(-10)`} fontSize="21.2" fill="#4d4d4d" textAnchor="end">{b.name}</text>
          </g>
        );
      })}
      <text transform="translate(559 1304.5) rotate(-90)" fontSize="29.2" textAnchor="middle">Life Expectancy</text>
      <text x="1558.5" y="1567" fontSize="29.2" textAnchor="middle">Region</text>
      <text x="2548" y="1195.5" fontSize="29.2">region</text>
      <g clipPath="url(#legendClip)">
        {legend.map(([name, fill], i) => (
          <g key={name}>
            <rect x="2572" y={1213 + i * 58} width="24" height="24" fill={fill} stroke="#333" strokeWidth="3.8" />
            <text x="2624" y={1233.6 + i * 58} fontSize="23.4">{name}</text>
          </g>
        ))}
      </g>
      <rect x="2886" y="1166" width="12" height="224" rx="6" fill="#808ba4" />
    </svg>
  );
}

const links = ["Life Expectancy", "Adult Mortality", "Infant Mortality", "Alcohol", "BMI", "Current Health Expenditure"];

export default function App() {
  return (
    <Page>
      <GlobalStyle />
      <Navbar>
        <Brand>World Map Dashboard</Brand>
        <Links>
          {links.map((l, i) => <NavLink key={l} $active={i === 0}>{l}</NavLink>)}
        </Links>
        <SourceLink>
          <svg width="38" height="30" viewBox="0 0 640 512" fill="#fff">
            <path d="M278.9 511.5l-61-17.7c-6.400-1.800-10-8.500-8.200-14.900L346.200 8.700c1.800-6.400 8.500-10 14.900-8.200l61 17.700c6.400 1.800 10 8.500 8.200 14.900L293.800 503.300c-1.900 6.400-8.500 10.100-14.900 8.200zm-114-112.200l43.500-46.400c4.600-4.900 4.300-12.700-.8-17.200L117 256l90.600-79.700c5.100-4.500 5.500-12.300.8-17.200l-43.500-46.400c-4.500-4.800-12.100-5.100-17-.5L3.800 247.200c-5.100 4.700-5.100 12.800 0 17.500l144.100 135.100c4.900 4.600 12.500 4.400 17-.5zm327.200.6l144.100-135.100c5.100-4.700 5.100-12.800 0-17.500L492.100 112.100c-4.800-4.500-12.400-4.300-17 .5L431.600 159c-4.600 4.900-4.300 12.700.8 17.200L523 256l-90.600 79.700c-5.100 4.500-5.500 12.300-.8 17.200l43.500 46.400c4.500 4.900 12.100 5.100 17 .6z" />
          </svg>
          Source Code
        </SourceLink>
      </Navbar>
      <Body>
        <Sidebar>
          <SidebarTitle>Select Year</SidebarTitle>
          <Select>
            2015
            <Caret />
          </Select>
        </Sidebar>
        <Main>
          <Card $height={862}>
            <CardTitle>Life Expectancy</CardTitle>
            <ChartArea>
              <WorldMap />
              <Toolbar />
            </ChartArea>
          </Card>
          <Card $height={640}>
            <Tabs>
              <Tab $width={189}>Description</Tab>
              <Tab $width={135} $active>Boxplot</Tab>
            </Tabs>
            <ChartArea>
              <BoxPlot />
            </ChartArea>
          </Card>
        </Main>
      </Body>
    </Page>
  );
}
